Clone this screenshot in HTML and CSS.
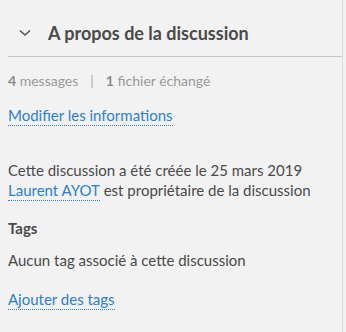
FILE: index.html
```html
<!DOCTYPE html>
<html lang="fr">
<head>
    <meta charset="UTF-8">
    <title>A propos de la discussion</title>
    <link rel="stylesheet" href="styles.css">
</head>
<body>
    <aside class="panel">
        <div class="panel-head">
            <svg class="chevron" width="12" height="8" viewBox="0 0 12 8">
                <path d="M1 1.5 L6 6 L11 1.5" fill="none" stroke="#555" stroke-width="1.6"/>
            </svg>
            <h2 class="title">A propos de la discussion</h2>
        </div>

        <div class="panel-body">
            <p class="stats">
                <span><b>4</b> messages</span>
                <span class="sep">|</span>
                <span><b>1</b> fichier échangé</span>
            </p>

            <a href="#" class="link">Modifier les informations</a>

            <p class="info">
                Cette discussion a été créée le 25 mars 2019<br>
                <a href="#" class="link">Laurent AYOT</a> est propriétaire de la discussion
            </p>

            <h3 class="section-title">Tags</h3>
            <p class="info">Aucun tag associé à cette discussion</p>

            <a href="#" class="link">Ajouter des tags</a>
        </div>
    </aside>
</body>
</html>
```

FILE: styles.css
```css
* {
    margin: 0;
    padding: 0;
    box-sizing: border-box;
}

body {
    font-family: Lato, sans-serif;
    background: #f2f2f2;
    color: #4a4a4a;
    width: 346px;
    height: 332px;
    overflow: hidden;
}

.panel {
    width: 343px;
    height: 332px;
    border-right: 1px solid #dcdcdc;
    padding-left: 8px;
}

.panel-head {
    display: flex;
    align-items: center;
    height: 57px;
    padding-top: 10px;
    border-bottom: 1px solid #c4c4c4;
}

.chevron {
    margin-left: 11px;
    margin-right: 17px;
}

.title {
    font-size: 18px;
    font-weight: 700;
    color: #4a4a4a;
}

.panel-body {
    padding-top: 15px;
}

.stats {
    font-size: 14px;
    line-height: 18px;
    color: #9a9a9a;
    display: flex;
    gap: 12px;
}

.stats b {
    font-weight: 700;
    color: #8a8a8a;
}

.sep {
    color: #b0b0b0;
}

.link {
    display: inline-block;
    color: #2a7fd4;
    text-decoration: none;
    border-bottom: 1px dotted #2a7fd4;
    font-size: 15px;
    line-height: 19px;
}

.panel-body > .link {
    margin-top: 16px;
}

.info {
    font-size: 15px;
    line-height: 20px;
    margin-top: 34px;
}

.section-title {
    font-size: 15px;
    font-weight: 700;
    margin-top: 18px;
}

.section-title + .info {
    margin-top: 13px;
}

.info + .link {
    margin-top: 20px;
}
```
